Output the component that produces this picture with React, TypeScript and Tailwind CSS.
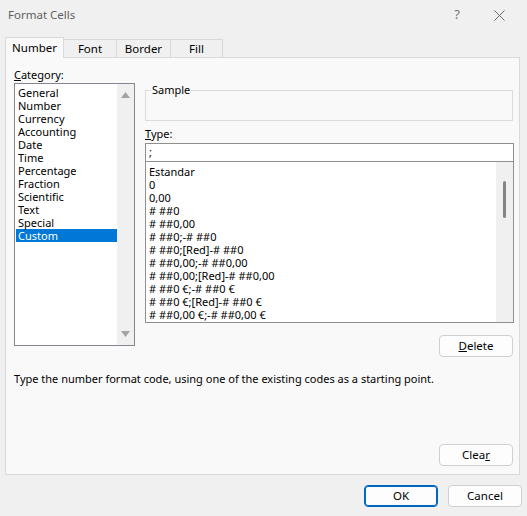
import React from "react";

const categories = [
  "General",
  "Number",
  "Currency",
  "Accounting",
  "Date",
  "Time",
  "Percentage",
  "Fraction",
  "Scientific",
  "Text",
  "Special",
  "Custom",
];

const formats = [
  "Estandar",
  "0",
  "0,00",
  "# ##0",
  "# ##0,00",
  "# ##0;-# ##0",
  "# ##0;[Red]-# ##0",
  "# ##0,00;-# ##0,00",
  "# ##0,00;[Red]-# ##0,00",
  "# ##0 €;-# ##0 €",
  "# ##0 €;[Red]-# ##0 €",
  "# ##0,00 €;-# ##0,00 €",
];

function Btn({
  children,
  primary,
}: {
  children: React.ReactNode;
  primary?: boolean;
}) {
  return (
    <button
      className={
        primary
          ? "w-[74px] h-[22px] rounded-[4px] bg-[#fdfdfd] border border-[#0067c0] shadow-[inset_0_0_0_1px_#0067c0] text-[11.5px] leading-none text-black"
          : "w-[74px] h-[22px] rounded-[4px] bg-[#fdfdfd] border border-[#d0d0d0] text-[11.5px] leading-none text-black"
      }
    >
      {children}
    </button>
  );
}

export default function App() {
  return (
    <div
      className="w-[527px] h-[516px] bg-[#f0f0f0] overflow-hidden text-black"
      style={{ fontFamily: '"Noto Sans", "Open Sans", sans-serif' }}
    >
      {/* Title bar */}
      <div className="h-[30px] flex items-center pl-[8px] text-[11.5px] text-[#5f5f5f]">
        <span>Format Cells</span>
        <span className="ml-auto mr-[34px] text-[13px] text-[#777]">?</span>
        <svg width="11" height="11" viewBox="0 0 11 11" className="mr-[22px]">
          <path d="M0.5 0.5 L10.5 10.5 M10.5 0.5 L0.5 10.5" stroke="#6a6a6a" strokeWidth="1" />
        </svg>
      </div>

      {/* Tabs */}
      <div className="mt-[7px] ml-[5px] flex items-end h-[21px] text-[11.5px]">
        <div className="w-[59px] h-[21px] bg-[#f9f9f9] border border-b-0 border-[#d9d9d9] flex items-center justify-center relative z-10">
          Number
        </div>
        <div className="w-[53px] h-[19px] border border-l-0 border-b-0 border-[#d9d9d9] flex items-center justify-center">
          Font
        </div>
        <div className="w-[54px] h-[19px] border border-l-0 border-b-0 border-[#d9d9d9] flex items-center justify-center">
          Border
        </div>
        <div className="w-[52px] h-[19px] border border-l-0 border-b-0 border-[#d9d9d9] flex items-center justify-center">
          Fill
        </div>
      </div>

      {/* Panel */}
      <div className="ml-[5px] w-[515px] h-[418px] -mt-px bg-[#f9f9f9] border border-[#d9d9d9] flex flex-col pl-[8px] pr-[5px] pt-[9px] pb-[8px] text-[11px]">
        <div className="flex gap-[10px]">
          {/* Category */}
          <div className="w-[121px] shrink-0 flex flex-col">
            <div className="h-[16px] leading-[16px]">
              <u>C</u>ategory:
            </div>
            <div className="h-[263px] bg-white border border-[#828790] flex">
              <div className="flex-1 pt-[2px] pl-[1px]">
                {categories.map((c) => (
                  <div
                    key={c}
                    className={
                      c === "Custom"
                        ? "h-[13px] leading-[13px] pl-[2px] bg-[#0078d7] text-white"
                        : "h-[13px] leading-[13px] pl-[2px]"
                    }
                  >
                    {c}
                  </div>
                ))}
              </div>
              <div className="w-[17px] bg-[#f0f0f0] flex flex-col items-center justify-between py-[8px]">
                <svg width="9" height="6" viewBox="0 0 9 6">
                  <path d="M4.5 0 L9 6 L0 6 Z" fill="#a3a3a3" />
                </svg>
                <svg width="9" height="6" viewBox="0 0 9 6">
                  <path d="M0 0 L9 0 L4.5 6 Z" fill="#a3a3a3" />
                </svg>
              </div>
            </div>
          </div>

          {/* Right column */}
          <div className="w-[369px] shrink-0 flex flex-col">
            <div className="mt-[23px] h-[31px] w-[368px] border border-[#dcdcdc] relative">
              <span className="absolute left-[5px] -top-[8px] px-[1px] bg-[#f9f9f9] leading-[14px]">
                Sample
              </span>
            </div>
            <div className="mt-[5px] h-[16px] leading-[16px]">
              <u>T</u>ype:
            </div>
            <div className="mt-[1px] h-[19px] bg-white border border-[#8f8f8f] pl-[3px] leading-[16px]">
              ;
            </div>
            <div className="h-[161px] bg-white border border-t-0 border-[#8f8f8f] flex">
              <div className="flex-1 pt-[3px] pl-[3px]">
                {formats.map((f) => (
                  <div key={f} className="h-[13px] leading-[13px] whitespace-pre">
                    {f}
                  </div>
                ))}
              </div>
              <div className="w-[17px] bg-[#f0f0f0] flex justify-center pt-[19px]">
                <div className="w-[3px] h-[37px] rounded-full bg-[#858585]" />
              </div>
            </div>
            <div className="mt-[12px] flex justify-end pr-[1px]">
              <Btn>
                <u>D</u>elete
              </Btn>
            </div>
          </div>
        </div>

        <div className="mt-[14px] h-[16px] leading-[16px]">
          Type the number format code, using one of the existing codes as a
          starting point.
        </div>

        <div className="mt-auto flex justify-end pr-[1px]">
          <Btn>
            Clea<u>r</u>
          </Btn>
        </div>
      </div>

      {/* Footer */}
      <div className="mt-[10px] flex justify-end gap-[10px] pr-[5px]">
        <Btn primary>OK</Btn>
        <Btn>Cancel</Btn>
      </div>
    </div>
  );
}
